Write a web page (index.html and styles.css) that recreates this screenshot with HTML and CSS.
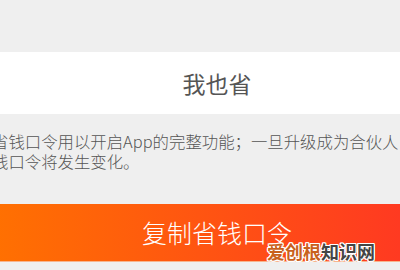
FILE: index.html
```html
<!DOCTYPE html>
<html lang="zh-CN">
<head>
    <meta charset="UTF-8">
    <title>省钱口令</title>
    <link rel="stylesheet" href="styles.css">
</head>
<body>
<div id="page">
    <div id="code-box">
        <span id="code">我也省</span>
    </div>
    <p id="tips">省钱口令用以开启App的完整功能；一旦升级成为合伙人，省<br>钱口令将发生变化。</p>
    <div id="copy-btn">复制省钱口令</div>
    <div id="mark"><span class="mark-a">爱创根</span><span class="mark-b">知识网</span></div>
</div>
</body>
</html>
```

FILE: styles.css
```css
* {
    margin: 0;
    padding: 0;
}
html, body {
    width: 400px;
    height: 270px;
    overflow: hidden;
    background-color: #efefef;
}
body {
    font-family: "Noto Sans CJK SC", "Noto Sans", sans-serif;
}
#page {
    position: relative;
    width: 468px;
    margin-left: -17px;
    padding-top: 52px;
}
#code-box {
    height: 62px;
    background-color: #fff;
    display: flex;
    align-items: center;
    justify-content: center;
}
#code {
    font-size: 23px;
    color: #555;
}
#tips {
    padding-left: 9px;
    margin-top: 17px;
    font-size: 16.4px;
    font-weight: 300;
    line-height: 20px;
    color: #555;
    white-space: nowrap;
    overflow: hidden;
    height: 73px;
}
#copy-btn {
    height: 57px;
    line-height: 57px;
    text-align: center;
    font-size: 25px;
    font-weight: 300;
    color: #fff;
    background: linear-gradient(to right, #ff7200, #ff3325);
    box-shadow: 0 1px 0 #f7b58e;
}
#mark {
    position: absolute;
    left: 284px;
    top: 240px;
    font-size: 18px;
    font-weight: bold;
    line-height: 22px;
    text-shadow: 1px 0 0 #fff, -1px 0 0 #fff, 0 1px 0 #fff, 0 -1px 0 #fff,
                 1px 1px 0 #fff, -1px -1px 0 #fff, 1px -1px 0 #fff, -1px 1px 0 #fff;
}
.mark-a {
    color: #c9611c;
}
.mark-b {
    color: #454545;
}
```
